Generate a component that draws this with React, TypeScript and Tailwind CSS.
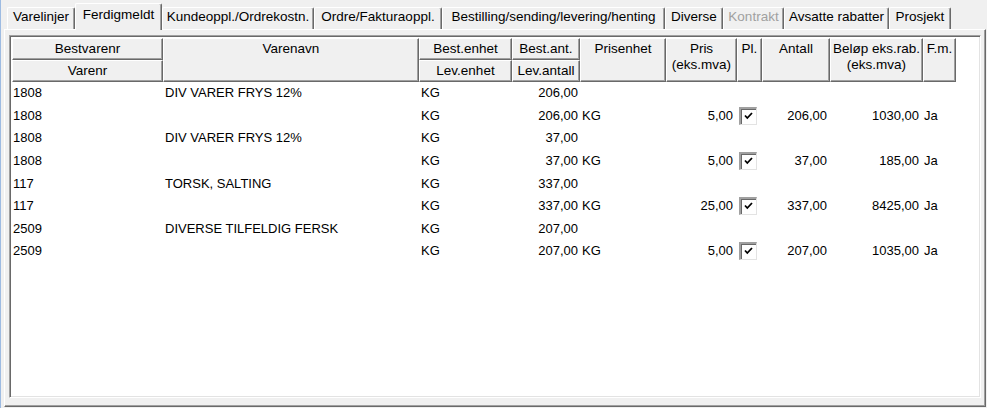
import React from 'react';

type Row = {
  nr: string;
  navn?: string;
  enhet: string;
  ant: string;
  prisenhet?: string;
  pris?: string;
  pl?: boolean;
  antall?: string;
  belop?: string;
  fm?: string;
};

const rows: Row[] = [
  { nr: '1808', navn: 'DIV VARER FRYS 12%', enhet: 'KG', ant: '206,00' },
  { nr: '1808', enhet: 'KG', ant: '206,00', prisenhet: 'KG', pris: '5,00', pl: true, antall: '206,00', belop: '1030,00', fm: 'Ja' },
  { nr: '1808', navn: 'DIV VARER FRYS 12%', enhet: 'KG', ant: '37,00' },
  { nr: '1808', enhet: 'KG', ant: '37,00', prisenhet: 'KG', pris: '5,00', pl: true, antall: '37,00', belop: '185,00', fm: 'Ja' },
  { nr: '117', navn: 'TORSK, SALTING', enhet: 'KG', ant: '337,00' },
  { nr: '117', enhet: 'KG', ant: '337,00', prisenhet: 'KG', pris: '25,00', pl: true, antall: '337,00', belop: '8425,00', fm: 'Ja' },
  { nr: '2509', navn: 'DIVERSE TILFELDIG FERSK', enhet: 'KG', ant: '207,00' },
  { nr: '2509', enhet: 'KG', ant: '207,00', prisenhet: 'KG', pris: '5,00', pl: true, antall: '207,00', belop: '1035,00', fm: 'Ja' },
];

const tabs = [
  { label: 'Varelinjer', w: 'w-[68px]' },
  { label: 'Ferdigmeldt', w: 'w-[87px]', selected: true },
  { label: 'Kundeoppl./Ordrekostn.', w: 'w-[152px]' },
  { label: 'Ordre/Fakturaoppl.', w: 'w-[128px]' },
  { label: 'Bestilling/sending/levering/henting', w: 'w-[223px]' },
  { label: 'Diverse', w: 'w-[58px]' },
  { label: 'Kontrakt', w: 'w-[61px]', disabled: true },
  { label: 'Avsatte rabatter', w: 'w-[105px]' },
  { label: 'Prosjekt', w: 'w-[62px]' },
];

const raised =
  'border border-t-white border-l-white border-r-[#696969] border-b-[#696969] shadow-[inset_-1px_-1px_0_#a0a0a0] bg-[#f0f0f0]';

const HCell = ({ className, children }: { className: string; children?: React.ReactNode }) => (
  <div className={`${raised} flex flex-col items-center leading-[16px] ${className}`}>{children}</div>
);

const Check = () => (
  <div className="relative w-[18px] h-[18px] bg-white border-t-2 border-l-2 border-r border-b border-t-[#a0a0a0] border-l-[#a0a0a0] border-r-[#e3e3e3] border-b-[#e3e3e3] shadow-[inset_1px_1px_0_#696969]">
    <svg className="absolute left-[3px] top-[3px]" width="9" height="8" viewBox="0 0 9 8">
      <path d="M1 3.5 L3.3 6 L8 1" stroke="#000" strokeWidth="1.8" fill="none" />
    </svg>
  </div>
);

export default function App() {
  return (
    <div className="w-[987px] h-[408px] bg-[#f0f0f0] border-l border-l-[#9dbbe2] overflow-hidden font-['Liberation_Sans',Arial,sans-serif] text-black">
      {/* tab strip */}
      <div className="h-[29px] flex items-end ml-[6px] text-[13.5px]">
        {tabs.map((t) =>
          t.selected ? (
            <div
              key={t.label}
              className={`${t.w} relative z-10 -mb-[1px] h-[27px] bg-[#f0f0f0] border-t border-l border-r border-t-white border-l-white border-r-[#696969] shadow-[inset_-1px_0_0_#a0a0a0] rounded-t-[2px] flex justify-center pt-[3px] leading-[16px] whitespace-nowrap`}
            >
              {t.label}
            </div>
          ) : (
            <div
              key={t.label}
              className={`${t.w} h-[22px] border-t border-l border-r border-t-white border-l-white border-r-[#696969] shadow-[inset_-1px_0_0_#a0a0a0] rounded-t-[2px] flex justify-center pt-[1px] leading-[16px] whitespace-nowrap ${t.disabled ? 'text-[#a0a0a0]' : ''}`}
            >
              {t.label}
            </div>
          )
        )}
      </div>

      {/* tab panel */}
      <div className="ml-[3px] w-[982px] h-[378px] border border-t-white border-l-white border-r-[#696969] border-b-[#696969] shadow-[inset_-1px_-1px_0_#a0a0a0] pl-[4px] pt-[5px]">
        <div className="w-[972px] h-[363px] bg-white border border-t-[#a0a0a0] border-l-[#a0a0a0] border-r-white border-b-white shadow-[inset_1px_1px_0_#696969,inset_-1px_-1px_0_#e3e3e3] pl-[2px] pt-[2px]">
          {/* header */}
          <div className="flex h-[44px] text-[13.5px]">
            <div className="flex flex-col w-[151px]">
              <HCell className="h-[22px] justify-center">Bestvarenr</HCell>
              <HCell className="h-[22px] justify-center">Varenr</HCell>
            </div>
            <HCell className="w-[256px] h-[44px] pt-[2px]">Varenavn</HCell>
            <div className="flex flex-col w-[93px]">
              <HCell className="h-[22px] justify-center">Best.enhet</HCell>
              <HCell className="h-[22px] justify-center">Lev.enhet</HCell>
            </div>
            <div className="flex flex-col w-[68px]">
              <HCell className="h-[22px] justify-center">Best.ant.</HCell>
              <HCell className="h-[22px] justify-center">Lev.antall</HCell>
            </div>
            <HCell className="w-[86px] h-[44px] pt-[2px]">Prisenhet</HCell>
            <HCell className="w-[71px] h-[44px] pt-[2px]">
              <span>Pris</span>
              <span>(eks.mva)</span>
            </HCell>
            <HCell className="w-[25px] h-[44px] pt-[2px]">Pl.</HCell>
            <HCell className="w-[68px] h-[44px] pt-[2px]">Antall</HCell>
            <HCell className="w-[93px] h-[44px] pt-[2px]">
              <span className="whitespace-nowrap">Beløp eks.rab.</span>
              <span>(eks.mva)</span>
            </HCell>
            <HCell className="w-[33px] h-[44px] pt-[2px]">F.m.</HCell>
          </div>

          {/* rows */}
          <div className="text-[13px] leading-[16px]">
            {rows.map((r, i) => (
              <div key={i} className="flex items-center h-[22.6px] whitespace-nowrap">
                <div className="w-[151px] pl-[1px]">{r.nr}</div>
                <div className="w-[256px] pl-[2px]">{r.navn}</div>
                <div className="w-[93px] pl-[2px]">{r.enhet}</div>
                <div className="w-[68px] pr-[2px] text-right">{r.ant}</div>
                <div className="w-[86px] pl-[2px]">{r.prisenhet}</div>
                <div className="w-[71px] pr-[4px] text-right">{r.pris}</div>
                <div className="w-[25px] pl-[2px] flex">{r.pl && <Check />}</div>
                <div className="w-[68px] pr-[3px] text-right">{r.antall}</div>
                <div className="w-[93px] pr-[4px] text-right">{r.belop}</div>
                <div className="w-[33px] pl-[1px]">{r.fm}</div>
              </div>
            ))}
          </div>
        </div>
      </div>
    </div>
  );
}
